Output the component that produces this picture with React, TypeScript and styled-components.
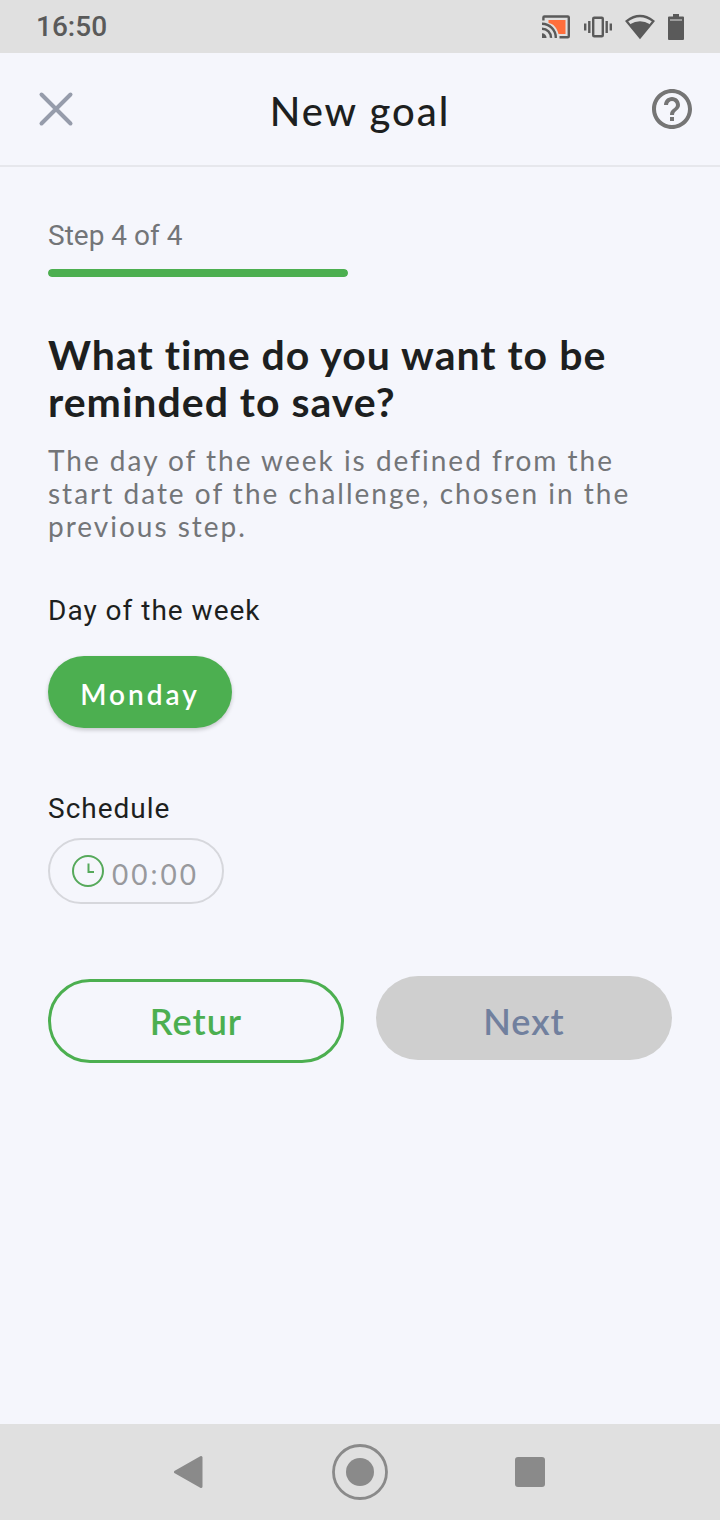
import React, { useState } from "react";
import styled, { createGlobalStyle } from "styled-components";

const color = {
  page: "#f5f6fc",
  system: "#e0e0e0",
  systemInk: "#5a5a5a",
  nav: "#8a8a8a",
  ink: "#1d1f20",
  muted: "#737578",
  green: "#4caf50",
  line: "#e6e7ec",
};

const display = `Lato, "Open Sans", sans-serif`;
const body = `Roboto, "Liberation Sans", sans-serif`;

const GlobalStyle = createGlobalStyle`
  * { box-sizing: border-box; }
  body { margin: 0; background: ${color.page}; }
  button, input { font: inherit; }
`;

const Screen = styled.div`
  display: flex;
  flex-direction: column;
  min-height: 100vh;
  background: ${color.page};
  color: ${color.ink};
  font-family: ${body};
  font-size: 28px;
`;

const StatusBar = styled.div`
  display: flex;
  align-items: center;
  justify-content: space-between;
  min-height: 53px;
  padding: 0 36px;
  background: ${color.system};
  color: ${color.systemInk};
  font-weight: 500;
  line-height: 32px;
`;

const StatusIcons = styled.div`
  display: flex;
  align-items: center;
  gap: 13px;
`;

const Header = styled.header`
  display: grid;
  grid-template-columns: 1fr auto 1fr;
  align-items: center;
  padding: 30px 24px;
  border-bottom: 2px solid ${color.line};
`;

const Title = styled.h1`
  margin: 0;
  padding-top: 4px;
  font-family: ${display};
  font-size: 40px;
  font-weight: 500;
  line-height: 48px;
  letter-spacing: 2px;
`;

const IconButton = styled.button<{ $end?: boolean }>`
  display: flex;
  justify-content: center;
  justify-self: ${(p) => (p.$end ? "end" : "start")};
  width: ${(p) => (p.$end ? 48 : 64)}px;
  padding: 0;
  border: 0;
  background: none;
  cursor: pointer;
`;

const Content = styled.main`
  flex: 1;
  padding: 52px 48px;
`;

const StepLabel = styled.label`
  display: block;
  color: ${color.muted};
  line-height: 34px;
`;

const StepBar = styled.progress`
  display: block;
  appearance: none;
  width: 300px;
  max-width: 100%;
  height: 8px;
  margin-top: 16px;
  border: 0;
  border-radius: 4px;
  overflow: hidden;
  background: ${color.line};

  &::-webkit-progress-bar { background: ${color.line}; }
  &::-webkit-progress-value { background: ${color.green}; border-radius: 4px; }
  &::-moz-progress-bar { background: ${color.green}; }
`;

const Question = styled.h2`
  margin: 54px 0 0;
  font-family: ${display};
  font-size: 41px;
  font-weight: 700;
  line-height: 47px;
  letter-spacing: 1px;
`;

const Hint = styled.p`
  margin: 19px 0 0;
  color: ${color.muted};
  font-family: ${display};
  line-height: 33px;
  letter-spacing: 2px;
`;

const Field = styled.section<{ $space: number }>`
  display: flex;
  flex-direction: column;
  align-items: flex-start;
  gap: 12px;
  margin-top: ${(p) => p.$space}px;
`;

const FieldLabel = styled.label`
  line-height: 34px;
  letter-spacing: 1px;
`;

const DayChip = styled.button`
  min-width: 184px;
  height: 72px;
  margin-top: 16px;
  padding: 4px 30px 0;
  border: 0;
  border-radius: 36px;
  background: ${color.green};
  box-shadow: 0 2px 4px rgba(0, 0, 0, 0.2);
  color: #fff;
  font-family: ${display};
  font-weight: 600;
  letter-spacing: 3px;
  cursor: pointer;
`;

const TimeField = styled.div`
  display: flex;
  align-items: center;
  gap: 6px;
  width: 176px;
  height: 66px;
  padding: 0 16px 0 20px;
  border: 2px solid #d6d7dc;
  border-radius: 33px;
`;

const TimeInput = styled.input`
  flex: 1;
  min-width: 0;
  padding: 6px 0 0;
  border: 0;
  outline: 0;
  background: none;
  color: ${color.ink};
  font-family: ${display};
  letter-spacing: 3px;

  &::placeholder { color: #98999d; opacity: 1; }
`;

const Actions = styled.div`
  display: grid;
  grid-template-columns: 1fr 1fr;
  gap: 32px;
  margin-top: 72px;
`;

const ActionButton = styled.button<{ $filled?: boolean }>`
  height: 84px;
  margin-top: ${(p) => (p.$filled ? 0 : 3)}px;
  padding: ${(p) => (p.$filled ? 6 : 0)}px 24px 0;
  border: ${(p) => (p.$filled ? "0" : `3px solid ${color.green}`)};
  border-radius: 42px;
  background: ${(p) => (p.$filled ? "#cfcfcf" : "transparent")};
  color: ${(p) => (p.$filled ? "#71809e" : color.green)};
  font-family: ${display};
  font-size: 36px;
  font-weight: 600;
  line-height: 44px;
  letter-spacing: 1px;
`;

const SystemNav = styled.nav`
  display: flex;
  justify-content: center;
  height: 96px;
  background: ${color.system};
`;

const NavButton = styled.button`
  display: flex;
  align-items: center;
  justify-content: center;
  width: 170px;
  padding: 0;
  border: 0;
  background: none;
`;

const CastIcon = () => (
  <svg width="29" height="24" viewBox="0 0 29 24" fill="none" stroke={color.systemInk} strokeWidth="2.4" aria-hidden="true">
    <path d="M6.5 5h17v14h-7C15 13 12 9 6.5 8z" fill="#ff6e3c" stroke="none" />
    <path d="M1.4 5.5V2.5q0-1 1-1h23.400q1 0 1 1v18.800q0 1-1 1H17.500" />
    <path d="M0 8.700A14 14 0 0 1 13.800 22.900M0 13.700A9 9 0 0 1 9 22.900" />
    <path d="M0 18.300A4.600 4.600 0 0 1 4.600 22.900H0z" fill={color.systemInk} stroke="none" />
  </svg>
);

const VibrateIcon = () => (
  <svg width="28" height="22" viewBox="0 0 28 22" fill="none" stroke={color.systemInk} strokeWidth="2.4" aria-hidden="true">
    <rect x="9.2" y="1.7" width="9.6" height="18.6" rx="1" />
    <path d="M5.3 5v12M1.2 7.5v7M22.7 5v12M26.800 7.500v7" />
  </svg>
);

const WifiIcon = () => (
  <svg width="30" height="26" viewBox="0 0 30 26" aria-hidden="true">
    <path d="M1.600 7.200Q15-3.200 28.400 7.200L15 23.500z" fill="none" stroke={color.systemInk} strokeWidth="2.2" />
    <path d="M5 10.300Q15 4.200 25 10.300L15 24z" fill={color.systemInk} />
  </svg>
);

const BatteryIcon = () => (
  <svg width="16" height="26" viewBox="0 0 16 26" aria-hidden="true">
    <path d="M5 0h6v2.500h4q1 0 1 1V25q0 1-1 1H1q-1 0-1-1V3.500q0-1 1-1h4z" fill={color.systemInk} />
    <path d="M2 6h12" stroke="#b9b9b9" strokeWidth="1.4" />
  </svg>
);

const CloseIcon = () => (
  <svg width="48" height="48" viewBox="0 0 48 48" aria-hidden="true">
    <path d="M9.500 9.500l29 29M38.500 9.500l-29 29" stroke="#969cab" strokeWidth="4" strokeLinecap="round" />
  </svg>
);

const HelpIcon = () => (
  <svg width="48" height="48" viewBox="0 0 24 24" fill="#757575" aria-hidden="true">
    <path d="M11 18h2v-2h-2v2zm1-16C6.480 2 2 6.480 2 12s4.480 10 10 10 10-4.480 10-10S17.520 2 12 2zm0 18c-4.410 0-8-3.590-8-8s3.590-8 8-8 8 3.590 8 8-3.590 8-8 8zm0-14c-2.210 0-4 1.790-4 4h2c0-1.100.9-2 2-2s2 .9 2 2c0 2-3 1.750-3 5h2c0-2.250 3-2.500 3-5 0-2.210-1.790-4-4-4z" />
  </svg>
);

const ClockIcon = () => (
  <svg width="36" height="36" viewBox="0 0 36 36" fill="none" stroke="#56a95b" strokeWidth="2" aria-hidden="true">
    <circle cx="18" cy="18" r="15" />
    <path d="M18.500 10.500V19H24" />
  </svg>
);

export default function App() {
  const [time, setTime] = useState("");
  return (
    <Screen>
      <GlobalStyle />
      <StatusBar>
        <span>16:50</span>
        <StatusIcons>
          <CastIcon />
          <VibrateIcon />
          <WifiIcon />
          <BatteryIcon />
        </StatusIcons>
      </StatusBar>
      <Header>
        <IconButton aria-label="Close">
          <CloseIcon />
        </IconButton>
        <Title>New goal</Title>
        <IconButton $end aria-label="Help">
          <HelpIcon />
        </IconButton>
      </Header>
      <Content>
        <StepLabel htmlFor="step">Step 4 of 4</StepLabel>
        <StepBar id="step" value={4} max={4} />
        <Question>What time do you want to be reminded to save?</Question>
        <Hint>
          The day of the week is defined from the start date of the challenge, chosen in the previous step.
        </Hint>
        <Field $space={51}>
          <FieldLabel htmlFor="day">Day of the week</FieldLabel>
          <DayChip id="day">Monday</DayChip>
        </Field>
        <Field $space={64}>
          <FieldLabel htmlFor="time">Schedule</FieldLabel>
          <TimeField>
            <ClockIcon />
            <TimeInput id="time" placeholder="00:00" value={time} onChange={(e) => setTime(e.target.value)} />
          </TimeField>
        </Field>
        <Actions>
          <ActionButton>Retur</ActionButton>
          <ActionButton $filled disabled={!time}>Next</ActionButton>
        </Actions>
      </Content>
      <SystemNav aria-label="System">
        <NavButton aria-label="Back">
          <svg width="32" height="34" viewBox="0 0 32 34" fill={color.nav} stroke={color.nav} strokeWidth="3" strokeLinejoin="round" aria-hidden="true">
            <path d="M27 2.500v29L1.500 17z" />
          </svg>
        </NavButton>
        <NavButton aria-label="Home">
          <svg width="56" height="56" viewBox="0 0 56 56" aria-hidden="true">
            <circle cx="28" cy="28" r="26.500" fill="none" stroke={color.nav} strokeWidth="2.800" />
            <circle cx="28" cy="28" r="14" fill={color.nav} />
          </svg>
        </NavButton>
        <NavButton aria-label="Recent apps">
          <svg width="30" height="30" viewBox="0 0 30 30" aria-hidden="true">
            <rect width="30" height="30" rx="3" fill={color.nav} />
          </svg>
        </NavButton>
      </SystemNav>
    </Screen>
  );
}
